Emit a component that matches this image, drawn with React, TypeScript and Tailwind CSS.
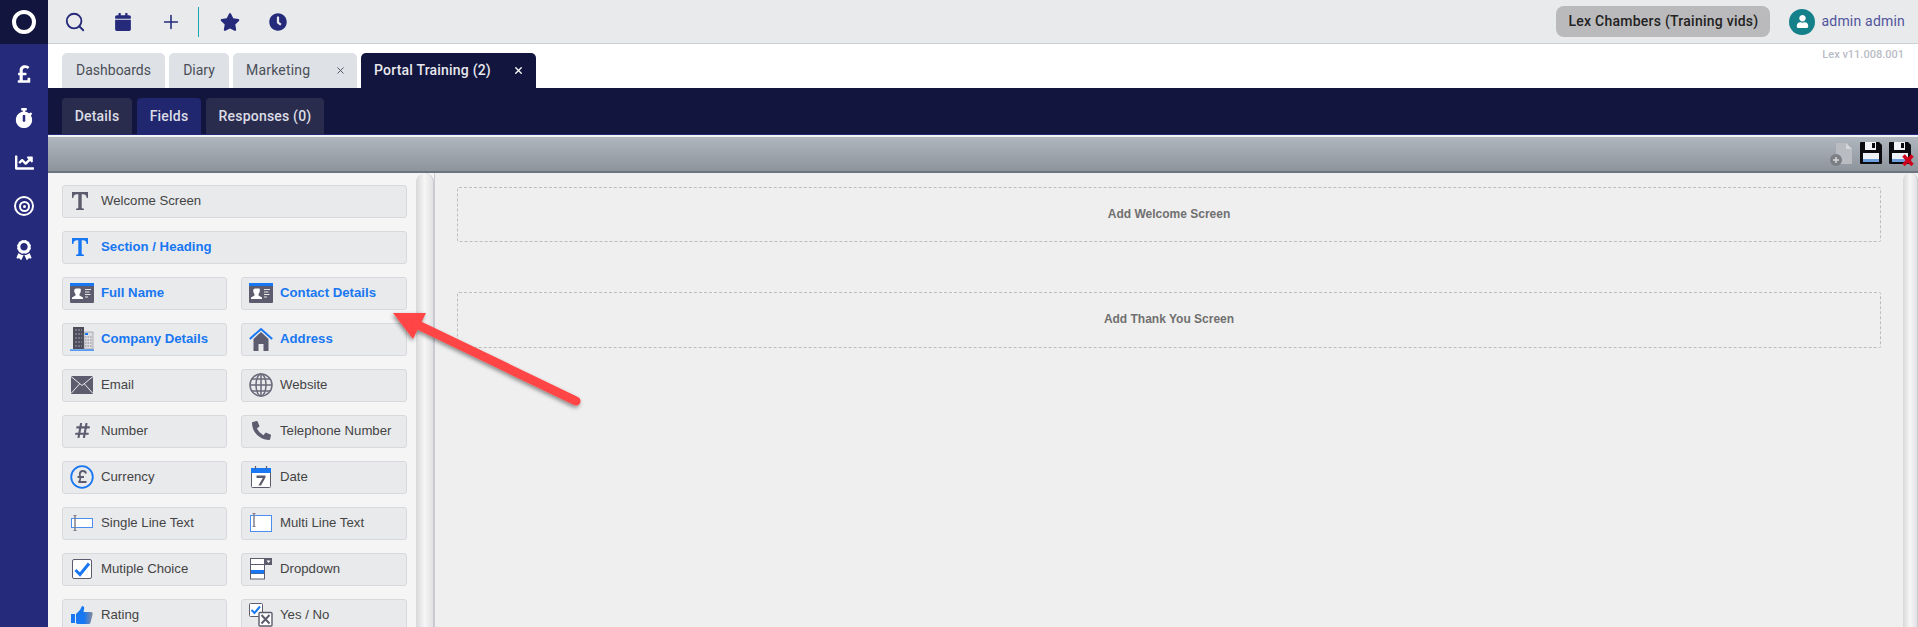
import React from "react";
import { FaPoundSign, FaStopwatch, FaChartLine, FaAward, FaCalendar, FaStar, FaClock, FaUser, FaHashtag, FaPhoneAlt } from "react-icons/fa";
import { Search, Plus, X } from "lucide-react";

const GRAY = "#5c5c6e";
const BLUE = "#1877f2";

function TIcon({ color }: { color: string }) {
    return (
        <svg width="20" height="20" viewBox="0 0 20 20" className="mr-[4px]">
            <path d="M2 1h16v6h-1.300c-.3-2.600-1.200-3.700-3.700-3.700h-1.300v13c0 1 .6 1.300 2.300 1.400v1.300H6v-1.300c1.700-.1 2.300-.4 2.300-1.400v-13H7c-2.500 0-3.400 1.100-3.700 3.700H2z" fill={color} />
        </svg>
    );
}

function CardIcon() {
    return (
        <svg width="24" height="20" viewBox="0 0 24 20">
            <rect width="24" height="20" rx="1" fill={GRAY} />
            <rect width="24" height="3" fill={BLUE} />
            <path d="M6 5.500h4c.8 0 1 1 .8 2.500-.2 1.500-.8 2.500-1.300 3.200v1.300l3.500 2v1.500H2v-1.500l3.500-2v-1.300C5 10.500 4.400 9.500 4.200 8 4 6.500 5.200 5.500 6 5.500z" fill="#fff" />
            <path d="M15 6.500h6M15 9h4.500M15 11.500h5.500M15 14h3" stroke="#e5e5e5" />
        </svg>
    );
}

function BuildingIcon() {
    return (
        <svg width="24" height="24" viewBox="0 0 24 24">
            <rect x="3" y="0" width="11" height="22" fill="#4d4d5a" />
            <rect x="14" y="5" width="9" height="17" fill="#dcdce2" stroke="#777" strokeWidth="0.500" />
            <path d="M5 3h7M5 7h7M5 11h7M5 15h7M5 19h7" stroke="#85859a" strokeWidth="1.500" strokeDasharray="2 1" />
            <path d="M15 10h7M15 13h7M15 16h7M15 19h7" stroke="#888" strokeDasharray="1.500 1" />
            <rect x="15" y="6" width="3" height="2" fill={BLUE} />
            <rect x="0" y="22.500" width="24" height="1.200" fill={BLUE} />
        </svg>
    );
}

function HouseIcon() {
    return (
        <svg width="24" height="24" viewBox="0 0 24 24">
            <path d="M4.500 12 12 5l7.500 7v12h-5v-7h-5v7h-5z" fill={GRAY} />
            <path d="M.8 12 12 2l11.200 10" fill="none" stroke={BLUE} strokeWidth="2" />
        </svg>
    );
}

function MailIcon() {
    return (
        <svg width="22" height="18" viewBox="0 0 22 18">
            <rect width="22" height="18" fill={GRAY} />
            <path d="M0 .5 11 9.500 22 .5M0 17.500 8.500 8M22 17.500 13.500 8" stroke="#e9eaec" fill="none" />
        </svg>
    );
}

function GlobeIcon() {
    return (
        <svg width="24" height="24" viewBox="0 0 24 24" fill="none" stroke="#6a6a7a" strokeWidth="1.500">
            <circle cx="12" cy="12" r="11" />
            <ellipse cx="12" cy="12" rx="5" ry="11" />
            <path d="M12 1v22M1 12h22M3 6h18M3 18h18" />
        </svg>
    );
}

function CurrencyIcon() {
    return (
        <svg width="24" height="24" viewBox="0 0 24 24">
            <circle cx="12" cy="12" r="10.800" fill="none" stroke={BLUE} strokeWidth="1.800" />
            <path d="M16 8.500c-.3-1.800-1.500-2.500-3-2.500-2 0-3.200 1.300-3.200 3.200 0 1.500.5 2.800.5 4.300 0 1.500-.8 3-1.800 3.500H16.500M7.500 12H14" fill="none" stroke={GRAY} strokeWidth="1.800" />
        </svg>
    );
}

function DateIcon() {
    return (
        <svg width="20" height="22" viewBox="0 0 20 22">
            <rect x=".5" y="2.500" width="19" height="19" rx="1" fill="#fff" stroke={GRAY} />
            <rect x="0" y="2" width="20" height="5" fill={BLUE} />
            <path d="M4.500 0v3M15.500 0v3" stroke={GRAY} strokeWidth="1.200" />
            <path d="M5.500 9.500h9v2l-4.500 8H7.500l4.200-7.500H5.500z" fill={GRAY} />
        </svg>
    );
}

function SingleLineIcon() {
    return (
        <svg width="22" height="16" viewBox="0 0 22 16">
            <rect x=".5" y="3.500" width="21" height="9" fill="#fff" stroke="#4a8fee" />
            <path d="M4 0v16" stroke="#80808c" strokeWidth="1.500" />
            <path d="M2.500 .5h3M2.500 15.500h3" stroke="#80808c" />
        </svg>
    );
}

function MultiLineIcon() {
    return (
        <svg width="22" height="19" viewBox="0 0 22 19">
            <rect x=".5" y="2.500" width="21" height="16" fill="#fff" stroke="#4a8fee" />
            <path d="M4 0v14" stroke="#80808c" strokeWidth="1.500" />
            <path d="M2.500 .5h3M2.500 13.500h3" stroke="#80808c" />
        </svg>
    );
}

function CheckIcon() {
    return (
        <svg width="20" height="20" viewBox="0 0 20 20">
            <rect x=".5" y=".5" width="19" height="19" rx="1.500" fill="#fff" stroke={GRAY} />
            <path d="M3.500 11 8 15.500 17 4.500" fill="none" stroke={BLUE} strokeWidth="3" />
        </svg>
    );
}

function DropdownIcon() {
    return (
        <svg width="22" height="22" viewBox="0 0 22 22">
            <rect x=".5" y=".5" width="14" height="20.500" fill="#fff" stroke={GRAY} />
            <path d="M0 6.500h15M0 15.500h15" stroke={GRAY} />
            <rect x="1" y="12" width="13" height="3.500" fill={BLUE} />
            <rect x="15" y="0" width="7" height="7" fill={GRAY} />
            <path d="M16.500 2.500h4l-2 2.500z" fill="#fff" />
        </svg>
    );
}

function RatingIcon() {
    return (
        <svg width="22" height="18" viewBox="0 0 22 18">
            <defs>
                <linearGradient id="rate" x1="0" x2="1" y1="0" y2="0">
                    <stop offset="0.600" stopColor={BLUE} />
                    <stop offset="1" stopColor="#8c8c98" />
                </linearGradient>
            </defs>
            <path d="M0 8h4v9H0zM5 8l4-4 2-4c2 0 2.500 1.500 2 3.500l-.5 2.500H20c2 0 2 2 1.500 3l-2 7.500c-.3 1-1 1.500-2 1.500H8c-1.500 0-3-.5-3-1.500z" fill="url(#rate)" />
        </svg>
    );
}

function YesNoIcon() {
    return (
        <svg width="24" height="24" viewBox="0 0 24 24">
            <rect x=".5" y=".5" width="13" height="13" rx="1" fill="#fff" stroke={GRAY} />
            <path d="M2.500 7 5.500 10 11 3.500" fill="none" stroke={BLUE} strokeWidth="2" />
            <rect x="10" y="9.500" width="13" height="13.500" rx="1" fill="#fff" stroke={GRAY} strokeWidth="1.400" />
            <path d="M12.500 12 20.500 20.500M20.500 12 12.500 20.500" stroke={GRAY} strokeWidth="2" />
        </svg>
    );
}

function SaveIcon({ cross }: { cross?: boolean }) {
    return (
        <svg width="25" height="24" viewBox="0 0 25 24">
            <path d="M0 1a1 1 0 0 1 1-1h18l3 3v18a1 1 0 0 1-1 1H1a1 1 0 0 1-1-1z" fill="#0b0b10" />
            <rect x="5" y="0" width="11" height="8" fill="#f4f4f6" />
            <rect x="12" y="1" width="3" height="5" fill="#0b0b10" />
            <rect x="3" y="11" width="16" height="9" fill="#eef2f8" />
            <rect x="3" y="17" width="16" height="3" fill="#6f9fdc" />
            {cross && <path d="M14.500 13.500 23.500 23M23.500 13.500 14.500 23" stroke="#d0021b" strokeWidth="3.500" />}
        </svg>
    );
}

type field = { label: string, icon: React.ReactNode, active?: boolean };

const fields: field[] = [
    { label: "Full Name", icon: <CardIcon />, active: true },
    { label: "Contact Details", icon: <CardIcon />, active: true },
    { label: "Company Details", icon: <BuildingIcon />, active: true },
    { label: "Address", icon: <HouseIcon />, active: true },
    { label: "Email", icon: <MailIcon /> },
    { label: "Website", icon: <GlobeIcon /> },
    { label: "Number", icon: <FaHashtag size={17} color={GRAY} /> },
    { label: "Telephone Number", icon: <FaPhoneAlt size={19} color={GRAY} /> },
    { label: "Currency", icon: <CurrencyIcon /> },
    { label: "Date", icon: <DateIcon /> },
    { label: "Single Line Text", icon: <SingleLineIcon /> },
    { label: "Multi Line Text", icon: <MultiLineIcon /> },
    { label: "Mutiple Choice", icon: <CheckIcon /> },
    { label: "Dropdown", icon: <DropdownIcon /> },
    { label: "Rating", icon: <RatingIcon /> },
    { label: "Yes / No", icon: <YesNoIcon /> },
];

function FieldButton({ item, wide }: { item: field, wide?: boolean }) {
    return (
        <div className={`flex h-[33px] items-center rounded-[3px] border border-[#d8d9dc] bg-[#e9eaec] font-['Liberation_Sans',sans-serif] text-[13.2px] ${wide ? "col-span-2" : ""} ${item.active ? "font-bold text-[#1877f2]" : "text-[#444]"}`}>
            <span className="flex w-[38px] shrink-0 items-center justify-center pb-[2px]">{item.icon}</span>
            <span className="pb-[2px]">{item.label}</span>
        </div>
    );
}

function Scrollbar({ width }: { width: string }) {
    return <div className={`${width} shrink-0 rounded-t-[9px] border-r border-[#c9cad2] bg-gradient-to-r from-[#d8d8da] via-[#f6f6f6] to-[#e2e2e5]`}></div>;
}

export default function App() {
    return (
        <div className="relative flex h-screen overflow-hidden bg-white font-['Roboto',sans-serif]">
            {/* SIDEBAR */}
            <div className="flex w-12 shrink-0 flex-col items-center bg-[#252a7b] text-white">
                <div className="mb-[8px] flex h-[44px] w-full items-center justify-center bg-[#12153d]">
                    <div className="h-[24px] w-[24px] rounded-full border-[4px] border-white"></div>
                </div>
                <div className="flex h-[44px] items-center"><FaPoundSign size={20} /></div>
                <div className="flex h-[44px] items-center"><FaStopwatch size={20} /></div>
                <div className="flex h-[44px] items-center"><FaChartLine size={19} /></div>
                <div className="flex h-[44px] items-center">
                    <div className="flex h-[20px] w-[20px] items-center justify-center rounded-full border-[2.5px] border-white">
                        <div className="flex h-[11px] w-[11px] items-center justify-center rounded-full border-[2px] border-white">
                            <div className="h-[3px] w-[3px] rounded-full bg-white"></div>
                        </div>
                    </div>
                </div>
                <div className="flex h-[44px] items-center"><FaAward size={20} /></div>
            </div>

            <div className="flex min-w-0 flex-1 flex-col">
                {/* TOP BAR */}
                <div className="flex h-[44px] shrink-0 items-center border-b border-[#cfcfd6] bg-[#e9eaec] pr-[13px] text-[#252a7b]">
                    <div className="flex w-[54px] justify-center"><Search size={22} strokeWidth={2} /></div>
                    <div className="flex w-[42px] justify-center"><FaCalendar size={18} /></div>
                    <div className="flex w-[54px] justify-center"><Plus size={22} strokeWidth={1.700} /></div>
                    <div className="h-[30px] w-[1px] bg-[#14a8b5]"></div>
                    <div className="flex w-[62px] justify-center"><FaStar size={20} /></div>
                    <div className="flex w-[34px] justify-center"><FaClock size={18} /></div>
                    <div className="ml-auto flex h-[31px] w-[214px] items-center justify-center rounded-[8px] bg-[#bababc] text-[14px] font-medium tracking-[0.25px] text-[#222]">Lex Chambers (Training vids)</div>
                    <div className="ml-[19px] flex h-[26px] w-[26px] items-center justify-center rounded-full bg-[#14808a] text-white"><FaUser size={13} /></div>
                    <span className="ml-[6px] text-[14px] tracking-[0.2px] text-[#50549c]">admin admin</span>
                </div>

                {/* TABS */}
                <div className="flex h-[44px] shrink-0 items-start justify-between pl-[14px] pr-[14px] pt-[9px]">
                    <div className="flex gap-[4px] text-[14px] text-[#4a4f57]">
                        <div className="flex h-[35px] w-[103px] items-center justify-center rounded-t-[5px] bg-[#dee1e6]">Dashboards</div>
                        <div className="flex h-[35px] w-[60px] items-center justify-center rounded-t-[5px] bg-[#dee1e6]">Diary</div>
                        <div className="flex h-[35px] w-[124px] items-center rounded-t-[5px] bg-[#dee1e6] pl-[13px] tracking-[0.2px]">
                            Marketing
                            <X size={11} strokeWidth={2} className="ml-[25px]" />
                        </div>
                        <div className="flex h-[35px] w-[175px] items-center rounded-t-[5px] bg-[#12153d] pl-[13px] font-medium tracking-[0.2px] text-[#e8e8ee]">
                            Portal Training (2)
                            <X size={11} strokeWidth={3} className="ml-[22px] text-white" />
                        </div>
                    </div>
                    <span className="mt-[-6px] text-[11px] font-medium text-[#b9bcc6]">Lex v11.008.001</span>
                </div>

                {/* SUB TABS */}
                <div className="flex h-[46px] shrink-0 items-end gap-[5px] bg-[#12153d] pl-[14px] text-[14px] font-medium tracking-[0.2px] text-[#dcdde6]">
                    <div className="flex h-[36px] w-[70px] items-center justify-center rounded-t-[4px] bg-[#2a2c4d]">Details</div>
                    <div className="flex h-[36px] w-[64px] items-center justify-center rounded-t-[4px] bg-[#21276f]">Fields</div>
                    <div className="flex h-[36px] w-[118px] items-center justify-center rounded-t-[4px] bg-[#2a2c4d]">Responses (0)</div>
                </div>

                {/* TOOLBAR */}
                <div className="h-[3px] shrink-0 border-t border-[#252a7b] bg-[#f2f3f4]"></div>
                <div className="flex h-[36px] shrink-0 items-center justify-end gap-[4px] border-b-2 border-[#6d747d] bg-gradient-to-b from-[#b0b6bd] to-[#8e949c] pr-[4px]">
                    <svg width="24" height="24" viewBox="0 0 24 24" className="mr-[2px]">
                        <path d="M6 1h10l6 6v15H6z" fill="#b9bcc1" />
                        <path d="M16 1v6h6z" fill="#d4d6d9" />
                        <circle cx="6" cy="18" r="6" fill="#7b7f85" />
                        <path d="M6 15v6M3 18h6" stroke="#d8d8d8" strokeWidth="1.500" />
                    </svg>
                    <SaveIcon />
                    <SaveIcon cross />
                </div>

                {/* BODY */}
                <div className="flex min-h-0 flex-1">
                    <div className="flex w-[386px] shrink-0 bg-[#f5f5f5] pl-[14px]">
                        <div className="w-[345px] shrink-0 pt-[12px]">
                            <div className="grid grid-cols-[165px_166px] gap-x-[14px] gap-y-[13px]">
                                <FieldButton item={{ label: "Welcome Screen", icon: <TIcon color={GRAY} /> }} wide />
                                <FieldButton item={{ label: "Section / Heading", icon: <TIcon color={BLUE} />, active: true }} wide />
                                {fields.map((item) => {
                                    return <FieldButton item={item} key={item.label} />
                                })}
                            </div>
                        </div>
                        <div className="ml-[9px] flex"><Scrollbar width="w-[18px]" /></div>
                    </div>
                    <div className="flex flex-1 border-l border-[#c9cad2] bg-[#efefef]">
                        <div className="flex-1 pl-[22px] pr-[22px] pt-[14px]">
                            <div className="flex h-[55px] items-center justify-center rounded-[2px] border border-dashed border-[#bdbdbd] pb-[2px] font-['Liberation_Sans',sans-serif] text-[12px] font-bold text-[#707070]">Add Welcome Screen</div>
                            <div className="mt-[50px] flex h-[56px] items-center justify-center rounded-[2px] border border-dashed border-[#bdbdbd] pb-[2px] font-['Liberation_Sans',sans-serif] text-[12px] font-bold text-[#707070]">Add Thank You Screen</div>
                        </div>
                        <Scrollbar width="w-[15px]" />
                    </div>
                </div>
            </div>

            {/* ARROW ANNOTATION */}
            <svg className="absolute left-[380px] top-[300px]" width="220" height="120" viewBox="0 0 220 120">
                <defs>
                    <filter id="arrowShadow" x="-10%" y="-10%" width="120%" height="130%">
                        <feDropShadow dx="-1" dy="2" stdDeviation="2" floodColor="#000" floodOpacity="0.45" />
                    </filter>
                </defs>
                <g filter="url(#arrowShadow)">
                    <path d="M13 13 46 13 33 39z" fill="#ff4444" />
                    <path d="M36 24 196 101" stroke="#ff4444" strokeWidth="9" strokeLinecap="round" />
                </g>
            </svg>
        </div>
    );
}
